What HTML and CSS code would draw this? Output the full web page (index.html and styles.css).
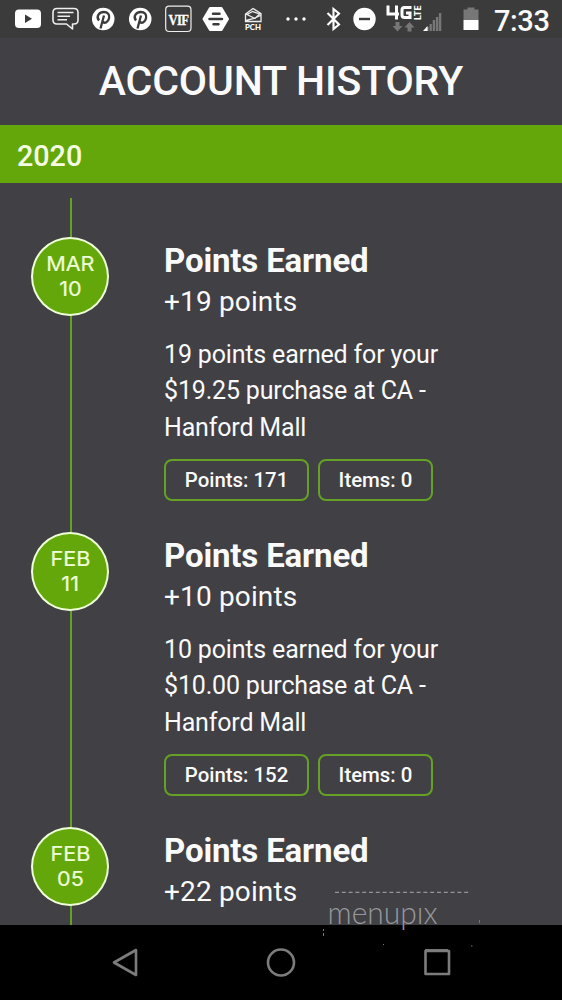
FILE: index.html
```html
<!DOCTYPE html>
<html lang="en">
<head>
<meta charset="utf-8">
<title>Account History</title>
<link rel="stylesheet" href="styles.css">
</head>
<body>
<div class="phone">
  <header class="status">
    <svg class="c1" width="26" height="38" viewBox="15 0 26 38"><rect x="15" y="9.500" width="26" height="18.500" rx="4" fill="#fff"/><path d="M25 14.500v8.500l7-4.200z" fill="#3b3b3b"/></svg>
    <svg class="c2" width="27" height="38" viewBox="52 0 27 38" fill="none" stroke="#eee" stroke-width="1.600" stroke-linejoin="round"><path d="M57 8.500h17q4 0 4 4v7.500q0 4-4 4h-1.500v5l-6-5H57q-4 0-4-4v-7.500q0-4 4-4z"/><path d="M57.500 12.500h16M57.500 16.200h12.500M57.500 19.800h9.500"/></svg>
    <svg class="c3" width="23" height="38" viewBox="92 0 23 38"><circle cx="103.200" cy="19" r="11.300" fill="#fff"/><path d="M99 20.500c-3.500-4.500.5-8.500 4.800-8.500 4 0 6 2.600 5.300 6-.8 4.500-4.800 6-6.500 3.300M104 15.500l-3.500 13" fill="none" stroke="#3b3b3b" stroke-width="2.300"/></svg>
    <svg class="c4" width="23" height="38" viewBox="92 0 23 38"><circle cx="103.200" cy="19" r="11.300" fill="#fff"/><path d="M99 20.500c-3.500-4.500.5-8.500 4.800-8.500 4 0 6 2.600 5.300 6-.8 4.500-4.800 6-6.500 3.300M104 15.500l-3.500 13" fill="none" stroke="#3b3b3b" stroke-width="2.300"/></svg>
    <svg class="c5" width="27" height="38" viewBox="165 0 27 38"><rect x="165.700" y="6.200" width="25.300" height="25.300" rx="3.500" fill="none" stroke="#eee" stroke-width="1.200"/><text class="vif" transform="translate(178.400 24.500) scale(.84 1)">VIF</text></svg>
    <svg class="c6" width="27" height="38" viewBox="202 0 27 38"><path d="M210 8h11.500l6.500 11-6.500 11H210l-6.500-11z" fill="#fff" stroke="#fff" stroke-width="2" stroke-linejoin="round"/><path d="M213 13.700h6.500M209.500 19h12.500M213.500 24.300h5" stroke="#3b3b3b" stroke-width="2.500" stroke-linecap="round"/></svg>
    <svg class="c7" width="18" height="38" viewBox="244 0 18 38"><path d="M245.500 14v7.500h15.500v-8l-8-5zM247 14.500l5.500-3 7 2.500-4.500 4.500zM246 20.500l8-2 6.500-3" fill="none" stroke="#eee" stroke-width="1.300"/><text class="pch" x="253" y="30" textLength="16" lengthAdjust="spacingAndGlyphs">PCH</text></svg>
    <svg class="c8" width="20" height="38" viewBox="286 0 20 38" fill="#fff"><circle cx="288" cy="19" r="1.700"/><circle cx="296" cy="19" r="1.700"/><circle cx="304" cy="19" r="1.700"/></svg>
    <svg class="c9" width="16" height="38" viewBox="326 0 16 38"><path d="M327.500 13l11.500 11.500-5.500 4.500V9l5.500 4.500L327.500 25" fill="none" stroke="#fff" stroke-width="2.100"/></svg>
    <svg class="c10" width="23" height="38" viewBox="353 0 23 38"><circle cx="364.500" cy="19" r="11.200" fill="#fff"/><path d="M359 19h11" stroke="#3b3b3b" stroke-width="2.400"/></svg>
    <svg class="c11" width="36" height="38" viewBox="386 0 36 38"><path d="M388 5.500V14h11M396.500 5.500V19.500M411.500 7.500h-7q-2.500 0-2.500 2.500v5q0 2.500 2.500 2.500h5.500v-4.500h-4" fill="none" stroke="#fff" stroke-width="3"/><text class="lte" transform="translate(420.500 20) rotate(-90)" textLength="14.500" lengthAdjust="spacingAndGlyphs">LTE</text><path d="M395.500 22h4v4h3l-5 5.500-5-5.500h3zM407.500 31.500h4v-4h3l-5-5.500-5 5.500h3z" fill="#777"/></svg>
    <svg class="c12" width="19" height="38" viewBox="423 0 19 38"><path d="M427.500 27v4M430.700 24v7M433.900 20v11M437.100 17v14M440.100 13v18" stroke="#777" stroke-width="2.400"/><path d="M423 31l4.500-5v5z" fill="#fff"/></svg>
    <svg class="c13" width="16" height="38" viewBox="463 0 16 38"><path d="M463.500 20V9.500h4V7.500h7v2h4V20z" fill="#777"/><path d="M463.500 20h15v10h-15z" fill="#fff"/></svg>
    <span class="time">7:33</span>
  </header>
  <h1 class="title">ACCOUNT HISTORY</h1>
  <div class="year">2020</div>
  <main class="timeline">
    <article class="entry">
      <div class="date"><span>MAR</span><span>10</span></div>
      <div class="body">
        <h2>Points Earned</h2>
        <p class="amount">+19 points</p>
        <p class="desc">19 points earned for your<br>$19.25 purchase at CA -<br>Hanford Mall</p>
        <div class="pills"><span class="pill points">Points: 171</span><span class="pill items">Items: 0</span></div>
      </div>
    </article>
    <article class="entry">
      <div class="date"><span>FEB</span><span>11</span></div>
      <div class="body">
        <h2>Points Earned</h2>
        <p class="amount">+10 points</p>
        <p class="desc">10 points earned for your<br>$10.00 purchase at CA -<br>Hanford Mall</p>
        <div class="pills"><span class="pill points">Points: 152</span><span class="pill items">Items: 0</span></div>
      </div>
    </article>
    <article class="entry">
      <div class="date"><span>FEB</span><span>05</span></div>
      <div class="body">
        <h2>Points Earned</h2>
        <p class="amount">+22 points</p>
      </div>
    </article>
  </main>
  <nav class="nav">
    <svg width="562" height="75" viewBox="0 925 562 75" fill="none" stroke="#7c7c7c" stroke-width="2.600" stroke-linejoin="round"><path d="M136 950v25l-22-12.500z"/><circle cx="281" cy="962.500" r="13"/><rect x="425.500" y="951" width="23.500" height="23"/></svg>
  </nav>
  <svg class="watermark" width="170" height="70" viewBox="320 880 170 70"><path d="M335 892.300h135" stroke="#aaa" stroke-dasharray="4 2.800"/><text x="327.500" y="924" textLength="110" lengthAdjust="spacingAndGlyphs">menupıx</text><path d="M323.500 929v2m0 2v3M479.500 920v3M383 944.500h1M471 946h1.500M425 949.500h23" stroke="#777"/></svg>
</div>
</body>
</html>
```
FILE: styles.css
```css
* { box-sizing: border-box; }
body { margin: 0; background: #414045; }
.phone {
  position: relative;
  width: 562px;
  height: 1000px;
  overflow: hidden;
  display: flex;
  flex-direction: column;
  background: #414045;
  color: #fafafa;
  font-family: Roboto, sans-serif;
}
.status { flex: none; height: 38px; background: #3b3b3b; display: flex; }
.status svg { flex: none; display: block; }
.c1 { margin-left: 15px; }
.c2 { margin-left: 11px; }
.c3 { margin-left: 13px; }
.c4 { margin-left: 14px; }
.c5 { margin-left: 13px; }
.c6 { margin-left: 10px; }
.c7 { margin-left: 15px; }
.c8 { margin-left: 24px; }
.c9 { margin-left: 20px; }
.c10 { margin-left: 11px; }
.c11 { margin-left: 10px; }
.c12 { margin-left: 1px; }
.c13 { margin-left: 21px; }
.vif { font: bold 15px "Liberation Serif", serif; letter-spacing: -0.8px; fill: #fff; stroke: #fff; stroke-width: 0.3px; text-anchor: middle; }
.pch { font: 900 8px Lato, sans-serif; fill: #fff; text-anchor: middle; }
.lte { font: bold 9px Roboto, sans-serif; fill: #fff; }
.time { margin-left: 15px; font-size: 29px; line-height: 42px; font-weight: 500; letter-spacing: -0.4px; white-space: nowrap; }
.title {
  flex: none;
  height: 87px;
  margin: 0;
  text-align: center;
  font-size: 41px;
  font-weight: 500;
  line-height: 87px;
  letter-spacing: -0.12px;
}
.year {
  flex: none;
  height: 58px;
  padding-left: 17px;
  background: #64a70b;
  color: #f4fce2;
  font-size: 28.700px;
  font-weight: 500;
  line-height: 63px;
}
.timeline {
  flex: 1;
  min-height: 0;
  overflow: hidden;
  margin-top: 15px;
  padding-top: 39px;
  background: linear-gradient(#64a124, #64a124) 69.500px 0 / 2px 100% no-repeat;
}
.entry { display: flex; height: 295px; padding-left: 31px; }
.date {
  flex: none;
  width: 78px;
  height: 79px;
  border: 2px solid #efffd8;
  border-radius: 50%;
  background: #64a70b;
  color: #efffd8;
  display: flex;
  flex-direction: column;
  align-items: center;
  padding-top: 13px;
  font: 400 20px/25px Inter, sans-serif;
}
.date span { transform: scaleX(1.08); -webkit-text-stroke: 0.2px #efffd8; }
.body { margin-left: 55px; }
h2 { margin: 3px 0 0; font-size: 33px; line-height: 42px; font-weight: 700; letter-spacing: -0.15px; white-space: nowrap; }
.amount { margin: 1px 0 0; font-size: 28px; line-height: 38px; letter-spacing: 0.15px; }
.desc { margin: 16px 0 0; font-size: 25px; line-height: 36.300px; letter-spacing: -0.17px; white-space: nowrap; }
.pills { display: flex; gap: 9px; margin-top: 13.500px; }
.pill {
  height: 42px;
  border: 2px solid #64a124;
  border-radius: 8px;
  text-align: center;
  font-size: 20.400px;
  line-height: 38px;
  font-weight: 500;
}
.points { width: 145px; }
.items { width: 115px; }
.nav { flex: none; height: 75px; background: #000; }
.nav svg { display: block; }
.watermark { position: absolute; left: 320px; top: 880px; }
.watermark text { font: 300 32px Lato, sans-serif; fill: #98989c; }
```
